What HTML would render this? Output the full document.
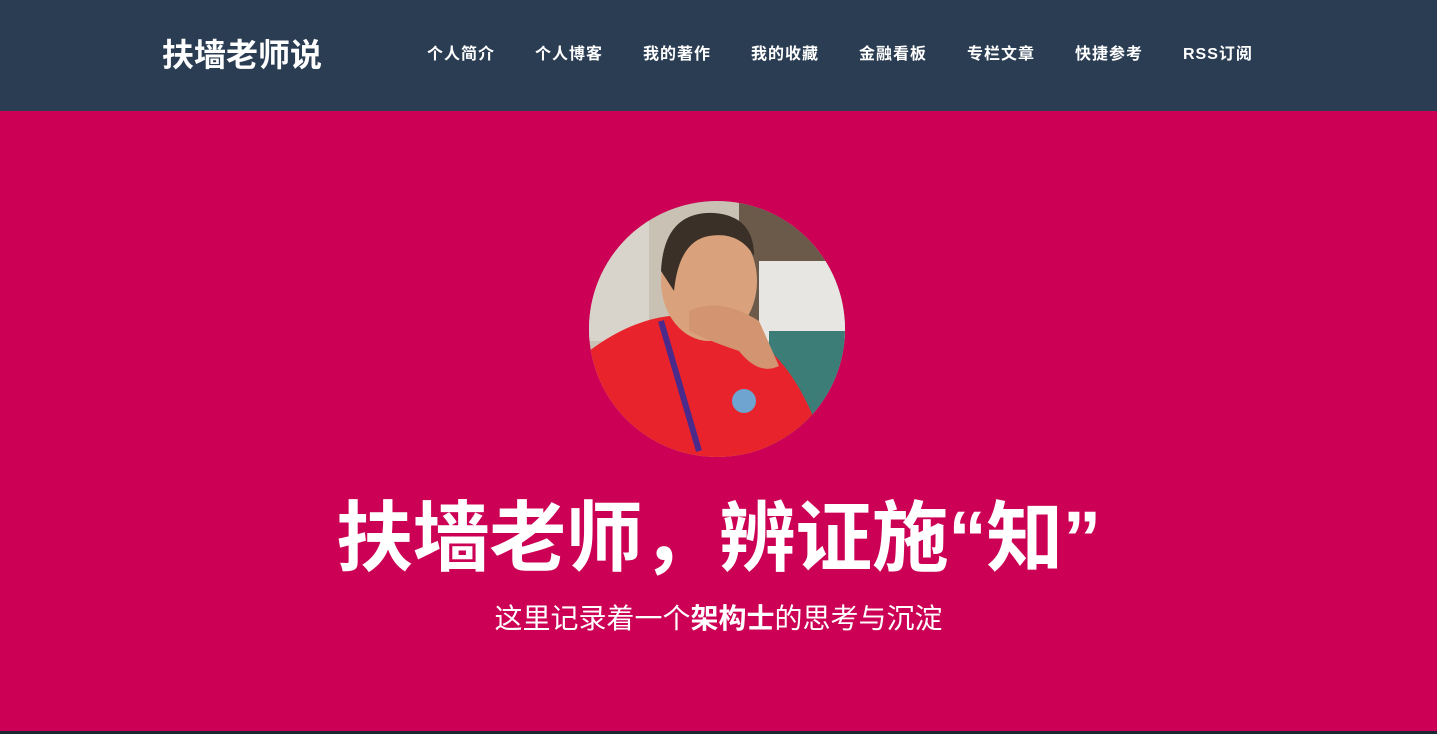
<!DOCTYPE html>
<html><head><meta charset="utf-8"><style>
*{margin:0;padding:0;box-sizing:border-box}
body{width:1437px;height:734px;overflow:hidden;background:#cc0055;font-family:"Liberation Sans","Noto Sans CJK SC",sans-serif;position:relative}
.hd{position:absolute;left:0;top:0;width:1437px;height:111px;background:#2a3d53}
.brand{position:absolute;left:162px;top:34px;font-size:32px;font-weight:bold;color:#fff;line-height:42px}
.nav a{position:absolute;top:45px;font-size:16px;letter-spacing:1px;font-weight:bold;color:#fff;line-height:20px;text-decoration:none}
.av{position:absolute;left:589px;top:201px;width:256px;height:256px;border-radius:50%;overflow:hidden}
h1{position:absolute;left:0;width:1437px;top:492px;text-align:center;color:#fff;font-size:77px;letter-spacing:-0.5px;font-weight:bold;line-height:94px}
.sub{position:absolute;left:0;width:1437px;top:601px;text-align:center;color:#fff;font-size:28px;line-height:36px}
.ft{position:absolute;left:0;top:731px;width:1437px;height:3px;background:#1b2833}
</style></head><body>
<div class="hd"><div class="brand">扶墙老师说</div>
<div class="nav"><a style="left:427px">个人简介</a><a style="left:535px">个人博客</a><a style="left:643px">我的著作</a><a style="left:751px">我的收藏</a><a style="left:859px">金融看板</a><a style="left:967px">专栏文章</a><a style="left:1075px">快捷参考</a><a style="left:1183px">RSS订阅</a></div></div>
<div class="av"><svg width="256" height="256" viewBox="0 0 256 256">
<rect width="256" height="256" fill="#c9c2b4"/>
<rect x="150" y="0" width="106" height="120" fill="#6b5a4a"/>
<rect x="170" y="60" width="86" height="80" fill="#e8e6e2"/>
<rect x="180" y="130" width="76" height="126" fill="#3c7d78"/>
<rect x="0" y="0" width="60" height="140" fill="#d8d4cc"/>
<path d="M0 150 Q40 120 80 115 L150 130 Q200 150 230 230 L240 256 L0 256Z" fill="#e8232b"/>
<ellipse cx="120" cy="80" rx="48" ry="60" fill="#d9a27c"/>
<path d="M72 70 Q75 10 125 12 Q165 15 165 55 Q150 30 120 35 Q90 40 85 90Z" fill="#3a3028"/>
<path d="M100 110 Q130 95 170 120 L190 165 Q170 175 150 150 Q120 140 100 130Z" fill="#d39471"/>
<path d="M72 120 L110 250" stroke="#4a2a8a" stroke-width="6" fill="none"/>
<circle cx="155" cy="200" r="12" fill="#6fa3d0"/>
</svg></div>
<h1>扶墙老师，辨证施“知”</h1>
<div class="sub">这里记录着一个<b>架构士</b>的思考与沉淀</div>
<div class="ft"></div>
</body></html>
